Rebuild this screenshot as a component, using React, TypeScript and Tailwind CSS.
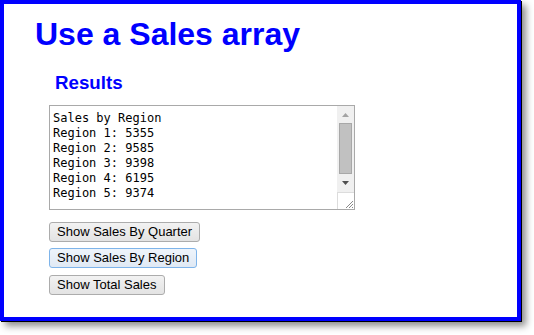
export default function App() {
  const lines = [
    "Sales by Region",
    "Region 1: 5355",
    "Region 2: 9585",
    "Region 3: 9398",
    "Region 4: 6195",
    "Region 5: 9374",
  ];

  const btn =
    "block h-[20px] px-[7px] rounded-[3px] border text-[13px] leading-[18px] text-black font-['Liberation_Sans',Arial,sans-serif]";

  return (
    <div className="w-[534px] h-[335px] bg-white">
      <div className="w-[521px] h-[321px] border-4 border-[#0000ff] bg-white shadow-[1px_1px_0_#000,5px_5px_7px_rgba(0,0,0,0.45)] pt-[12px]">
        <h1 className="ml-[31px] text-[32px] leading-[37px] font-bold text-[#0000ff] font-['Liberation_Sans',Arial,sans-serif]">
          Use a Sales array
        </h1>
        <div className="ml-[45px]">
          <h3 className="mt-[19px] ml-[6px] text-[18.72px] leading-[21.5px] font-bold text-[#0000ff] font-['Liberation_Sans',Arial,sans-serif]">
            Results
          </h3>

          {/* textarea drawn by hand so the scrollbar matches */}
          <div className="mt-[11.5px] w-[306px] h-[105px] border border-[#a9a9a9] flex bg-white">
            <div className="flex-1 pl-[3px] pt-[5px] text-[12px] leading-[15px] text-black font-['DejaVu_Sans_Mono',monospace] whitespace-pre">
              {lines.map((l) => (
                <div key={l}>{l}</div>
              ))}
            </div>
            <div className="w-[17px] h-full flex flex-col bg-[#f0f0f0]">
              <div className="h-[17px] flex items-center justify-center">
                <svg width="7" height="4" viewBox="0 0 7 4">
                  <path d="M3.5 0 L7 4 L0 4 Z" fill="#a3a3a3" />
                </svg>
              </div>
              <div className="mx-[2px] h-[51px] bg-[#c1c1c1] border border-[#a8a8a8]" />
              <div className="flex-1 flex items-center justify-center">
                <svg width="7" height="4" viewBox="0 0 7 4">
                  <path d="M0 0 L7 0 L3.5 4 Z" fill="#505050" />
                </svg>
              </div>
              <div className="h-[17px] bg-white border-l border-t border-[#dcdcdc] flex items-end justify-end pr-[1px] pb-[1px]">
                <svg width="8" height="8" viewBox="0 0 8 8">
                  <path d="M1 8 L8 1 M4 8 L8 4 M7 8 L8 7" stroke="#8a8a8a" strokeWidth="1" />
                </svg>
              </div>
            </div>
          </div>

          <div className="mt-[12px] flex flex-col items-start">
            <button className={`${btn} border-[#acacac] bg-gradient-to-b from-[#f2f2f2] to-[#e3e3e3]`}>
              Show Sales By Quarter
            </button>
            <button className={`${btn} mt-[6px] border-[#7eb4ea] bg-gradient-to-b from-[#eef4fb] to-[#e0e9f4]`}>
              Show Sales By Region
            </button>
            <button className={`${btn} mt-[7px] border-[#acacac] bg-gradient-to-b from-[#f2f2f2] to-[#e3e3e3]`}>
              Show Total Sales
            </button>
          </div>
        </div>
      </div>
    </div>
  );
}
